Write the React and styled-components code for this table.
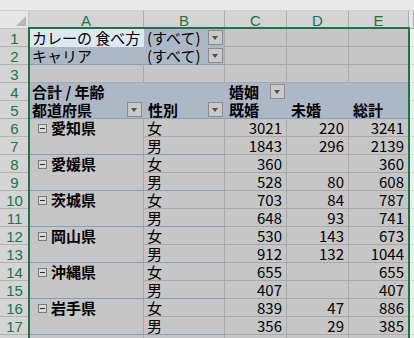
import React from "react";
import styled, { createGlobalStyle } from "styled-components";

const GRID = "#a9a9a9";
const BLUE = "#7f9fc5";
const SEL = "#c6c6c6";
const PIVOT = "#adb8c6";
const ACTIVE = "#dde8f4";
const GREEN = "#217346";

const regions = [
  { name: "愛知県", rows: [["女", 3021, 220, 3241], ["男", 1843, 296, 2139]] },
  { name: "愛媛県", rows: [["女", 360, "", 360], ["男", 528, 80, 608]] },
  { name: "茨城県", rows: [["女", 703, 84, 787], ["男", 648, 93, 741]] },
  { name: "岡山県", rows: [["女", 530, 143, 673], ["男", 912, 132, 1044]] },
  { name: "沖縄県", rows: [["女", 655, "", 655], ["男", 407, "", 407]] },
  { name: "岩手県", rows: [["女", 839, 47, 886], ["男", 356, 29, 385]] },
];

const GlobalStyle = createGlobalStyle`
  html, body {
    margin: 0;
    padding: 0;
    background: #eeeeee;
    overflow: hidden;
  }
`;

const App = () => {
  let rowNo = 5;
  return (
    <Page>
      <GlobalStyle />
      <TopBar />
      <Sheet>
        <Corner>
          <CornerMark />
        </Corner>
        {["A", "B", "C", "D", "E"].map((c) => (
          <ColHead key={c}>{c}</ColHead>
        ))}
        <ColHead $off />

        {/* report filters */}
        <RowHead>1</RowHead>
        <Cell $bg={ACTIVE}>カレーの 食べ方</Cell>
        <Cell $bg={PIVOT} $br={GRID} $split>
          (すべて)
          <DropButton />
        </Cell>
        <Cell $bb={GRID} $br={GRID} />
        <Cell $bb={GRID} $br={GRID} />
        <Cell $bb={GRID} />
        <OffCell />

        <RowHead>2</RowHead>
        <Cell $bg={PIVOT} $bb={BLUE}>キャリア</Cell>
        <Cell $bg={PIVOT} $bb={BLUE} $br={GRID} $split>
          (すべて)
          <DropButton />
        </Cell>
        <Cell $bb={GRID} $br={GRID} />
        <Cell $bb={GRID} $br={GRID} />
        <Cell $bb={GRID} />
        <OffCell />

        <RowHead>3</RowHead>
        <Cell $bb={GRID} $br={GRID} />
        <Cell $bb={GRID} $br={GRID} />
        <Cell $bb={GRID} $br={GRID} />
        <Cell $bb={GRID} $br={GRID} />
        <Cell $bb={GRID} />
        <OffCell />

        {/* pivot header */}
        <RowHead>4</RowHead>
        <Cell $bg={PIVOT} $bold>合計 / 年齢</Cell>
        <Cell $bg={PIVOT} />
        <Cell $bg={PIVOT} $bold $split $pad="4px">
          婚姻
          <DropButton />
        </Cell>
        <Cell $bg={PIVOT} />
        <Cell $bg={PIVOT} />
        <OffCell />

        <RowHead>5</RowHead>
        <Cell $bg={PIVOT} $bb={BLUE} $bold $split>
          都道府県
          <DropButton />
        </Cell>
        <Cell $bg={PIVOT} $bb={BLUE} $bold $split $pad="4px">
          性別
          <DropButton />
        </Cell>
        <Cell $bg={PIVOT} $bb={BLUE} $bold $pad="4px">既婚</Cell>
        <Cell $bg={PIVOT} $bb={BLUE} $bold $pad="4px">未婚</Cell>
        <Cell $bg={PIVOT} $bb={BLUE} $bold $pad="4px">総計</Cell>
        <OffCell />

        {regions.map((region) =>
          region.rows.map(([sex, married, single, total], i) => {
            rowNo += 1;
            const last = i === region.rows.length - 1;
            return (
              <React.Fragment key={rowNo}>
                <RowHead>{rowNo}</RowHead>
                <Cell $bb={last ? BLUE : "transparent"} $br={GRID} $bold>
                  {i === 0 && (
                    <>
                      <MinusBox />
                      {region.name}
                    </>
                  )}
                </Cell>
                <Cell $bb={last ? BLUE : GRID} $br={GRID}>{sex}</Cell>
                <Cell $bb={GRID} $br={GRID} $num>{married}</Cell>
                <Cell $bb={GRID} $br={GRID} $num>{single}</Cell>
                <Cell $bb={GRID} $num>{total}</Cell>
                <OffCell />
              </React.Fragment>
            );
          })
        )}

        {/* next row, only its top edge shows */}
        <RowHead />
        <Cell $br={GRID} />
        <Cell $br={GRID} />
        <Cell $br={GRID} />
        <Cell $br={GRID} />
        <Cell />
        <OffCell />
      </Sheet>
      <Selection />
    </Page>
  );
};

const Page = styled.div`
  position: relative;
  width: 414px;
  height: 338px;
  overflow: hidden;
  background: #eeeeee;
  font-family: "Noto Sans CJK JP", "Noto Sans", sans-serif;
`;

const TopBar = styled.div`
  height: 10px;
  background: #e9e9e9;
  border-bottom: 1px solid #cfcfcf;
`;

const Sheet = styled.div`
  display: grid;
  grid-template-columns: 29px 115px 81px 62px 62px 60px 1fr;
  grid-auto-rows: 18px;
`;

const Corner = styled.div`
  position: relative;
  background: #e6e6e6;
  border-right: 1px solid #c4c4c4;
  border-bottom: 1px solid #c4c4c4;
`;

const CornerMark = styled.div`
  position: absolute;
  right: 2px;
  bottom: 2px;
  width: 0;
  height: 0;
  border-left: 10px solid transparent;
  border-bottom: 10px solid #b7b7b7;
`;

const ColHead = styled.div`
  display: flex;
  align-items: center;
  justify-content: center;
  box-sizing: border-box;
  background: ${(p) => (p.$off ? "#e6e6e6" : "#d4d4d4")};
  border-right: 1px solid #ababab;
  border-bottom: 1px solid #ababab;
  color: ${GREEN};
  font-family: "Liberation Sans", Arial, sans-serif;
  font-size: 15px;
  line-height: 17px;
  padding-top: 1px;
`;

const RowHead = styled.div`
  display: flex;
  align-items: center;
  justify-content: center;
  box-sizing: border-box;
  background: #d4d4d4;
  border-bottom: 1px solid #b2b2b2;
  color: ${GREEN};
  font-family: "Liberation Sans", Arial, sans-serif;
  font-size: 15px;
  line-height: 17px;
  padding-top: 1px;
`;

const Cell = styled.div`
  display: flex;
  align-items: center;
  justify-content: ${(p) =>
    p.$num ? "flex-end" : p.$split ? "space-between" : "flex-start"};
  box-sizing: border-box;
  min-width: 0;
  white-space: nowrap;
  background: ${(p) => p.$bg || SEL};
  border-bottom: 1px solid ${(p) => p.$bb || "transparent"};
  border-right: 1px solid ${(p) => p.$br || "transparent"};
  padding: 0 ${(p) => (p.$num ? "4px" : p.$split ? "1px" : "0")} 0
    ${(p) => p.$pad || "3px"};
  color: #000;
  font-size: 15px;
  font-weight: ${(p) => (p.$bold ? 700 : 400)};
  line-height: 17px;
`;

const OffCell = styled.div`
  background: #eeeeee;
  border-bottom: 1px solid #d6d6d6;
`;

const DropButton = styled.span`
  position: relative;
  flex: none;
  width: 15px;
  height: 15px;
  box-sizing: border-box;
  border: 1px solid #8c8c8c;
  background: #c9c9c9;

  &::after {
    content: "";
    position: absolute;
    left: 3px;
    top: 5px;
    border-left: 3.5px solid transparent;
    border-right: 3.5px solid transparent;
    border-top: 4px solid #505050;
  }
`;

const MinusBox = styled.span`
  position: relative;
  flex: none;
  width: 9px;
  height: 9px;
  box-sizing: border-box;
  margin: 1px 4px 0 6px;
  border: 1px solid #7a7a7a;
  background: #d9d9d9;

  &::after {
    content: "";
    position: absolute;
    left: 1px;
    top: 3px;
    width: 5px;
    height: 1px;
    background: #333;
  }
`;

const Selection = styled.div`
  position: absolute;
  left: 28px;
  top: 27px;
  width: 382px;
  height: 400px;
  box-sizing: border-box;
  border: 2px solid ${GREEN};
  pointer-events: none;
`;

export default App;
